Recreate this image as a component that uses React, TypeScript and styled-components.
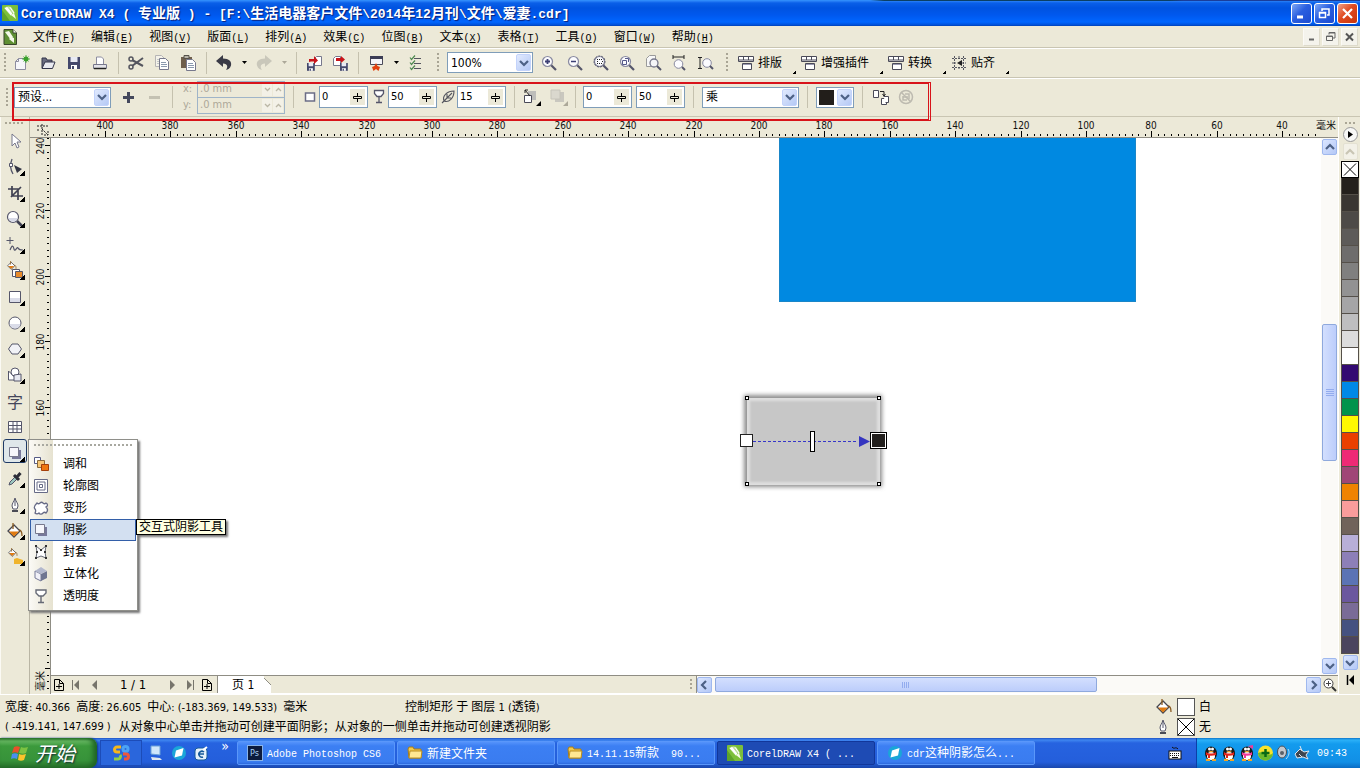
import React from "react";
import styled, { createGlobalStyle, css } from "styled-components";

const face = "#ece9d8";
const cjk = `"Noto Sans CJK SC", sans-serif`;
const tahoma = `"DejaVu Sans Condensed", ${cjk}`;
const mono = `"Liberation Mono", ${cjk}`;

const GlobalStyle = createGlobalStyle`
  *, *::before, *::after { box-sizing: border-box; }
  body { margin: 0; overflow: hidden; background: ${face}; font: 12px/16px ${tahoma}; color: #000; }
  button, input, select { font: inherit; color: inherit; margin: 0; padding: 0; border: 0; background: none; border-radius: 0; }
  svg { display: block; flex: none; }
`;

const Window = styled.div`
  display: flex;
  flex-direction: column;
  height: 100vh;
`;

/* Latin runs use their own family and size next to the 12px Chinese glyphs. */
const Latin = styled.span<{ $size: number; $mono?: boolean }>`
  font-family: ${(p) => (p.$mono ? mono : tahoma)};
  font-size: ${(p) => p.$size}px;
  white-space: pre;
`;

function Mixed({ text, size = 10, fixed = true }: { text: string; size?: number; fixed?: boolean }) {
  return (
    <>
      {text.split(/([\x20-\x7e]+)/).filter(Boolean).map((s, i) =>
        /^[\x20-\x7e]/.test(s) ? <Latin key={i} $size={size} $mono={fixed}>{s}</Latin> : s
      )}
    </>
  );
}

function Art({ w = 20, h = 20, children }: { w?: number; h?: number; children: React.ReactNode }) {
  return <svg width={w} height={h} viewBox={`0 0 ${w} ${h}`} fill="none" aria-hidden="true">{children}</svg>;
}

/* ---------- title bar ---------- */
const TitleBar = styled.header`
  display: flex;
  align-items: center;
  gap: 3px;
  height: 26px;
  flex: none;
  padding: 0 2px;
  background:
    linear-gradient(90deg, #2f8bfa 64%, #0b3f63 65%, #0b3f63 86%, #1a3d9a 87%) top / 100% 1px no-repeat,
    linear-gradient(#3a93ff 0, #0a5fe8 3px, #0053e0 8px, #0058ee 15px, #0066ff 22px, #0050d8 25px, #003fb0 26px);
`;
const Title = styled.h1`
  flex: 1;
  margin: 0;
  font: bold 14px/20px ${cjk};
  color: #fff;
  text-shadow: 1px 1px 1px #0a1e74;
  white-space: pre;
`;
const WindowButton = styled.button<{ $close?: boolean }>`
  display: grid;
  place-items: center;
  width: 21px;
  height: 21px;
  margin-left: -1px;
  border: 1px solid #fff;
  border-radius: 3px;
  background: ${(p) =>
    p.$close
      ? "linear-gradient(135deg, #f0a088, #e04a20 45%, #c8350c)"
      : "linear-gradient(135deg, #7fa8f5, #2a5fe0 45%, #1c4bd0)"};
`;

function CorelMark({ page }: { page?: boolean }) {
  if (page) {
    return (
      <Art w={16} h={16}>
        <path d="M2 .5h9l3.500 3.500v11.500H2z" fill="#5f8f34" stroke="#39452c" />
        <path d="M11 .5V4h3.500" fill="#fff" stroke="#39452c" />
        <path d="M3 3l4-1 4 6-2 3zM9 8l3 1v5l-5-4z" fill="#f4f9e8" />
      </Art>
    );
  }
  return (
    <Art w={16} h={16}>
      <rect width="16" height="16" rx="1" fill="#7cbf3a" />
      <path d="M0 5l8 11H0z" fill="#5da32b" />
      <path d="M2 3l4-2 5 7-2 3zM5 1l4 1 4 6-2 1z" fill="#fff" stroke="#7cbf3a" strokeWidth=".5" />
      <path d="M9 10l3-2 2 6z" fill="#f4f9e8" />
    </Art>
  );
}

/* ---------- menu bar ---------- */
const MenuBar = styled.nav`
  display: flex;
  align-items: center;
  height: 22px;
  flex: none;
  padding: 0 2px;
  border-bottom: 1px solid #c9c5b2;
  box-shadow: 0 1px #fff;
`;
const MenuList = styled.div`
  display: flex;
  flex: 1;
  padding: 2px 0 0 7px;
`;
const MenuButton = styled.button`
  padding: 0 8px;
  line-height: 18px;
  white-space: nowrap;
`;
const ChildButton = styled.button`
  display: grid;
  place-items: center;
  width: 17px;
  height: 18px;
  margin-left: 2px;
  background: #f4f3ec;
  border: 1px solid #fbfaf6;
  border-right-color: #dddacb;
  border-bottom-color: #dddacb;
`;

const menus = [
  ["文件", "F"], ["编辑", "E"], ["视图", "V"], ["版面", "L"], ["排列", "A"], ["效果", "C"],
  ["位图", "B"], ["文本", "X"], ["表格", "T"], ["工具", "O"], ["窗口", "W"], ["帮助", "H"],
];

/* ---------- toolbars ---------- */
const Toolbar = styled.div`
  display: flex;
  align-items: center;
  height: 30px;
  flex: none;
  border-bottom: 1px solid #c9c5b2;
  box-shadow: 0 1px #fff;
`;
const PropertyBar = styled(Toolbar)`
  position: relative;
  height: 39px;
  box-shadow: none;
`;
const RedFrame = styled.div`
  position: absolute;
  left: 12px;
  top: 4px;
  width: 919px;
  height: 39px;
  border: 2px solid #d8131a;
  border-right: 3px double #d8131a;
  pointer-events: none;
  z-index: 3;
`;
const Grip = styled.span<{ $w: number }>`
  flex: none;
  width: ${(p) => p.$w}px;
  height: 19px;
  background: repeating-linear-gradient(#a9a595 0 2px, transparent 2px 4px) center / 2px 100% no-repeat;
`;
const Divider = styled.span<{ $w?: number }>`
  flex: none;
  width: ${(p) => p.$w ?? 10}px;
  height: 22px;
  background: linear-gradient(#c5c1ae, #c5c1ae) center / 1px 100% no-repeat;
`;
const ToolButton = styled.button<{ $w?: number }>`
  display: grid;
  place-items: center;
  flex: none;
  width: ${(p) => p.$w ?? 26}px;
  height: 24px;
`;
const LabelButton = styled.button`
  display: flex;
  align-items: center;
  flex: none;
  height: 28px;
  white-space: nowrap;
`;
const IconSlot = styled.span`
  width: 22px;
  padding-left: 2px;
`;
const CornerTriangle = styled.span`
  align-self: flex-end;
  width: 3px;
  height: 3px;
  margin: 0 3px 3px 11px;
  background: linear-gradient(135deg, transparent 45%, #000 46%);
`;

const Combo = styled.span<{ $w: number }>`
  position: relative;
  flex: none;
  width: ${(p) => p.$w}px;
  height: 21px;
  border: 1px solid #7f9db9;
  background: #fff;
`;
const Select = styled.select`
  appearance: none;
  width: 100%;
  height: 19px;
  padding: 0 18px 0 3px;
  font-size: 12px;
`;
const DropArrow = styled.span`
  position: absolute;
  right: 1px;
  top: 1px;
  display: grid;
  place-items: center;
  width: 15px;
  height: 17px;
  border-radius: 2px;
  background: linear-gradient(135deg, #e1eafe, #b5c9f5);
  border: 1px solid #c3d3fb;
  pointer-events: none;
`;
const ColorChip = styled.span`
  position: absolute;
  left: 2px;
  top: 2px;
  width: 15px;
  height: 15px;
  background: #221e1a;
  pointer-events: none;
`;
const Chevron = ({ dir = "down", c = "#4d6185" }: { dir?: string; c?: string }) => {
  const d: Record<string, string> = {
    down: "M1 3l4 4 4-4", up: "M1 7l4-4 4 4", left: "M7 1L3 5l4 4", right: "M3 1l4 4-4 4",
  };
  return <Art w={10} h={10}><path d={d[dir]} stroke={c} strokeWidth="2.200" /></Art>;
};
function DropDown({ w, label, value, chip }: { w: number; label: string; value: string; chip?: boolean }) {
  return (
    <Combo $w={w}>
      <Select aria-label={label}><option>{value}</option></Select>
      {chip && <ColorChip />}
      <DropArrow><Chevron /></DropArrow>
    </Combo>
  );
}

const Field = styled.span<{ $w: number }>`
  display: flex;
  align-items: center;
  flex: none;
  width: ${(p) => p.$w}px;
  height: 22px;
  border: 1px solid #7f9db9;
  background: #fff;
`;
const FieldInput = styled.input`
  flex: 1;
  min-width: 0;
  padding-left: 2px;
  font-size: 11px;
  line-height: 18px;
`;
const SpinHandle = styled.button`
  display: grid;
  place-items: center;
  width: 15px;
  height: 16px;
  margin-right: 2px;
  background: ${face};
`;
function NumberField({ label, value, w = 49 }: { label: string; value: string; w?: number }) {
  return (
    <Field $w={w}>
      <FieldInput aria-label={label} defaultValue={value} />
      <SpinHandle aria-label={`${label} +/-`}>
        <Art w={11} h={11}>
          <path d="M5.500 1v3M5.500 7v3" stroke="#000" />
          <path d="M1.500 4.500h8v2h-8z" fill={face} stroke="#000" />
        </Art>
      </SpinHandle>
    </Field>
  );
}
const Stack = styled.div`
  display: flex;
  flex-direction: column;
  flex: none;
`;
const AxisRow = styled.label`
  display: flex;
  align-items: center;
  height: 16px;
  font-size: 11px;
  color: #aca899;
`;
const AxisName = styled.span`
  width: 14px;
`;
const AxisBox = styled.span`
  display: flex;
  align-items: center;
  gap: 1px;
  width: 88px;
  height: 17px;
  padding-right: 1px;
  border: 1px solid #9fb4c8;
`;
const AxisInput = styled.input`
  flex: 1;
  min-width: 0;
  padding-left: 2px;
`;
const TinyBox = styled.span`
  display: grid;
  place-items: center;
  width: 10px;
  height: 13px;
  background: #f3f1e7;
`;
const Spacer = styled.span<{ $w: number }>`
  flex: none;
  width: ${(p) => p.$w}px;
`;

const ink = "#4a4a58";
const Caret = ({ c = "#000" }: { c?: string }) => <Art w={5} h={3}><path d="M0 0h5L2.500 3z" fill={c} /></Art>;
const Floppy = ({ x, y, s }: { x: number; y: number; s: number }) => (
  <g transform={`translate(${x} ${y}) scale(${s})`}>
    <path d="M0 0h12v12H0z" fill="#44486c" /><path d="M2.500 0h7v5h-7z" fill="#e8eaf4" /><path d="M3 8h6v4H3z" fill="#fff" /><path d="M4 9h2v3H4z" fill="#44486c" />
  </g>
);
const Sheet = ({ x, y }: { x: number; y: number }) => (
  <g transform={`translate(${x} ${y})`}><path d="M.5.500h6l3 3v8h-9z" fill="#fff" stroke="#77788c" /><path d="M2 4.500h5M2 6.500h6M2 8.500h6" stroke="#8b9aae" /></g>
);
const Lens = ({ children }: { children?: React.ReactNode }) => (
  <Art w={16} h={16}><path d="M10 10l5 5" stroke="#55566a" strokeWidth="2.200" /><circle cx="6.500" cy="6.500" r="5" fill="#fbfbfe" stroke="#8889a0" strokeWidth="1.200" />{children}</Art>
);

const fileIcons: Record<string, React.ReactNode> = {
  新建: <Art w={16} h={16}><path d="M1.500 6.500l3-3h7v11h-10z" fill="#f6f6fa" stroke="#8d8da0" /><path d="M1.500 6.500h3v-3" stroke="#8d8da0" /><circle cx="12" cy="4" r="2.500" fill="#3aa22c" /><path d="M12 0v8M8 4h8M9.500 1.500l5 5M14.500 1.500l-5 5" stroke="#3aa22c" strokeWidth=".8" /></Art>,
  打开: <Art w={16} h={16}><path d="M2 13V3h4l1 2h5v3" fill="#6a6c80" stroke="#33354a" /><path d="M2 13.500L5 7h10l-2.500 6.500z" fill="#e9eaf0" stroke="#33354a" /></Art>,
  保存: <Art w={14} h={14}><Floppy x={1} y={1} s={1} /></Art>,
  打印: <Art w={16} h={16}><path d="M4.500 9V2h5l2 2v5" fill="#fff" stroke="#8d8da0" /><path d="M1.500 9.500h13v4h-13z" fill="#e4e4ea" stroke="#77788c" /><path d="M2 13.500h12" stroke="#222" strokeWidth="1.500" /></Art>,
};
const editIcons: Record<string, React.ReactNode> = {
  剪切: <Art w={16} h={16}><path d="M4 5l11 6M4 11l11-8" stroke="#55565f" strokeWidth="2" /><circle cx="3" cy="4" r="2" stroke="#55565f" strokeWidth="1.500" /><circle cx="3" cy="12" r="2" stroke="#55565f" strokeWidth="1.500" /></Art>,
  复制: <Art w={16} h={16}><g opacity=".45"><Sheet x={1} y={0} /></g><Sheet x={5} y={3} /></Art>,
  粘贴: <Art w={16} h={16}><path d="M1 2h11v11H1z" fill="#6f5f4c" /><path d="M4 .5h5v3H4z" fill="#b7b3a8" stroke="#55514a" /><Sheet x={6} y={4} /></Art>,
};
const zoomIcons: Record<string, React.ReactNode> = {
  放大: <Lens><path d="M4 6.500h5M6.500 4v5" stroke="#3c3f74" strokeWidth="1.800" /></Lens>,
  缩小: <Lens><path d="M4 6.500h5" stroke="#3c3f74" strokeWidth="1.500" /></Lens>,
  缩放选定范围: <Lens><circle cx="6.500" cy="6.500" r="5.500" stroke="#55566a" strokeDasharray="2 1" /><path d="M4 4.500h6M4 8.500h6M4 6.500h1M9 6.500h1" stroke="#222" strokeDasharray="1 1" /></Lens>,
  缩放全部: <Lens><path d="M3.500 5.500h4v4h-4zM6 3.500h3.500V7" stroke="#55588a" /></Lens>,
  缩放页面: <Art w={17} h={16}><path d="M1.500 3.500l3-3h6v11h-9z" fill="#f7f7f7" stroke="#9a9a9a" /><circle cx="9" cy="8" r="4" fill="#f5f5f8" stroke="#77788c" strokeWidth="1.300" /><path d="M12 11l4 4" stroke="#55566a" strokeWidth="2" /></Art>,
  缩放页宽: <Art w={16} h={16}><path d="M2 0v4M13 0v4M2 2h11" stroke="#222" /><circle cx="7.500" cy="9" r="4.300" fill="#fbfbfe" stroke="#8889a0" /><path d="M11 12l3 3" stroke="#55566a" strokeWidth="2" /></Art>,
  缩放页高: <Art w={17} h={16}><path d="M1 2.500h4M1 13.500h4M3 2v12" stroke="#222" /><circle cx="10" cy="8" r="4.300" fill="#fbfbfe" stroke="#8889a0" /><path d="M13 11l3 3" stroke="#55566a" strokeWidth="2" /></Art>,
};
const PluginArt = () => (
  <Art w={17} h={16}><path d="M.5 1.500h15v5H.5z" fill="#fff" stroke={ink} /><path d="M5.500 1v4M10.500 1v4M.5 5h15" stroke={ink} /><path d="M4.500 8.500h9v6h-9z" fill="#fff" stroke={ink} /><path d="M5 9.500h8" stroke="#9a9ab0" /></Art>
);
const SnapArt = () => (
  <Art w={16} h={16}><path d="M3.500 1v14M12.500 1v14M8 1v3M8 12v3M1 3.500h14M1 12.500h14M1 8h4M11 8h4" stroke="#55565f" strokeDasharray="2 1" /><path d="M11 5v6L6 8z" fill="#222" /></Art>
);
const RectArt = () => <Art w={12} h={12}><path d="M1.500 2h9v8h-9z" fill="#fff" stroke="#6b6d86" strokeWidth="1.500" /></Art>;
const GlassArt = () => <Art w={12} h={16}><path d="M1.500 1.500h9v3L8 7.500H4L1.500 4.500zM6 7.500v6M3 13.500h6" fill="#fff" stroke="#55566a" strokeWidth="1.300" /></Art>;
const LeafArt = () => <Art w={14} h={14}><path d="M1 13L11 3M3 11C1 6 6 1 13 1c0 7-5 12-10 10M6 8V4M6 8h4" stroke="#55565f" strokeWidth="1.100" /></Art>;

/* ---------- workspace ---------- */
const Main = styled.main`
  display: flex;
  flex: 1;
  min-height: 0;
`;
const Toolbox = styled.aside`
  flex: none;
  width: 30px;
  padding: 4px 0 0 2px;
  border-left: 1px solid #fbfaf4;
  border-right: 1px solid #b9b5a4;
`;
const ToolGrip = styled.div`
  height: 6px;
  margin-right: 4px;
  background: repeating-linear-gradient(90deg, #aaa695 0 2px, transparent 2px 4px) 2px 1px / 20px 2px no-repeat;
`;
const ToolSlot = styled.div`
  position: relative;
  height: 26px;
  z-index: 4;
`;
const Tool = styled.button<{ $active?: boolean }>`
  position: relative;
  display: grid;
  place-items: center;
  width: 24px;
  height: 24px;
  padding-top: 3px;
  border: 1px solid transparent;
  ${(p) => p.$active && css`
    border-color: #1f3a66;
    border-radius: 3px;
    background: #dfe7ea;
  `}
`;
const ToolMore = styled.span`
  position: absolute;
  right: 1px;
  bottom: 0;
  width: 5px;
  height: 5px;
  background: linear-gradient(135deg, transparent 45%, #000 46%);
`;
const TextGlyph = styled.span`
  font: 16px/18px ${cjk};
  color: #44465a;
`;

const Flyout = styled.div`
  position: absolute;
  left: 25px;
  top: 0;
  width: 110px;
  height: 172px;
  padding: 13px 1px 0;
  border: 1px solid #8f8f8a;
  background:
    repeating-linear-gradient(90deg, #a8a8a0 0 2px, transparent 2px 4px) 5px 4px / 99px 2px no-repeat,
    linear-gradient(90deg, #fbfaf6 0, #e6e2d0 24px, #fff 24px);
  box-shadow: 2px 2px 2px #777;
`;
const FlyoutItem = styled.button<{ $on?: boolean }>`
  display: flex;
  align-items: center;
  gap: 14px;
  width: 100%;
  height: 22px;
  padding-left: 2px;
  border: 1px solid ${(p) => (p.$on ? "#335ea8" : "transparent")};
  background: ${(p) => (p.$on ? "#d3e0f1" : "none")};
`;
const Tooltip = styled.div`
  position: absolute;
  left: 133px;
  top: 80px;
  padding: 0 2px;
  border: 1px solid #000;
  background: #ffffe1;
  line-height: 14px;
  white-space: nowrap;
  box-shadow: 2px 2px 2px #777;
`;

const dark = "#55566a";
const Mug = ({ x = 0, y = 0, s = 1 }: { x?: number; y?: number; s?: number }) => (
  <g transform={`translate(${x} ${y}) scale(${s})`}>
    <path d="M7 2l6 6-6 6-6-6z" fill="#fff" stroke="#44454f" strokeWidth="1.300" /><path d="M2 8.500h10L7 13.500z" fill="#e07a10" /><path d="M6 0v6M12 7c3 0 3 3 3 6" stroke="#8a5a20" strokeWidth="1.300" />
  </g>
);
const NibArt = () => <Art w={14} h={16}><path d="M7 1c1 4 3 5 3 8l-1 3H5L4 9c0-3 2-4 3-8z" fill="#fff" stroke={dark} /><path d="M7 3v6" stroke={dark} /><path d="M4 13h6v2H4z" fill="#4a4b55" /></Art>;
const ShadowArt = () => <Art w={16} h={16}><path d="M5 5h9v9H5z" fill="#77789a" /><path d="M2.500 2.500h9v9h-9z" fill="#f6f6fb" stroke="#77788c" /></Art>;

const tools: { name: string; more?: boolean; art: React.ReactNode }[] = [
  { name: "挑选", art: <Art><path d="M7 3v12l3-3 2 5 2-1-2-5h4z" fill="#fff" stroke="#77788c" /></Art> },
  { name: "形状", more: true, art: <Art><path d="M7 2c-2 5-2 10 1 15" stroke={dark} strokeWidth="1.300" /><path d="M4.500 6.500h3v3h-3z" fill="#fff" stroke={dark} /><path d="M9 8l8 4-5 4z" fill="#333544" /></Art> },
  { name: "裁剪", more: true, art: <Art><path d="M7 3v10h11M3 6h10v11M6 14L16 4" stroke="#3f4052" strokeWidth="1.700" /></Art> },
  { name: "缩放", more: true, art: <Art><path d="M12 12l6 6" stroke="#3f4052" strokeWidth="2.600" /><circle cx="8" cy="8" r="5.500" fill="#fff" stroke={dark} strokeWidth="1.200" /><path d="M3.500 9h9c-1 5-8 5-9 0z" fill="#d7d9e6" /></Art> },
  { name: "手绘", more: true, art: <Art><path d="M5 2v7M1.500 5.500h7" stroke={dark} /><path d="M5 15c2-5 3-5 4-1s3-3 4-1 2 2 5 2" stroke={dark} strokeWidth="1.200" /></Art> },
  { name: "智能填充", more: true, art: <Art><Mug x={2} y={0} s={0.6} /><path d="M7.500 8.500h7v7h-7z" fill="#fff" stroke={dark} /><path d="M10.500 10.500h7v6h-7z" fill="#e88b2a" stroke={dark} /></Art> },
  { name: "矩形", more: true, art: <Art><path d="M4.500 4.500h11v11h-11z" fill="#fff" stroke={dark} /><path d="M5 11h10v4H5z" fill="#dadce8" /></Art> },
  { name: "椭圆形", more: true, art: <Art><circle cx="10" cy="10" r="6" fill="#fff" stroke={dark} /><path d="M4.500 11h11c-1 6-10 6-11 0z" fill="#dadce8" /></Art> },
  { name: "多边形", more: true, art: <Art><path d="M7 5h6l3.500 5-3.500 5H7l-3.500-5z" fill="#f1f2f7" stroke={dark} /></Art> },
  { name: "基本形状", more: true, art: <Art><path d="M3.500 6v9h9z" fill="#fff" stroke={dark} /><circle cx="10" cy="7" r="4" fill="#fff" stroke={dark} /><path d="M9 10l7-1v7H9z" fill="#e7e8f0" stroke={dark} /></Art> },
  { name: "文本", art: <TextGlyph>字</TextGlyph> },
  { name: "表格", art: <Art><path d="M3.500 4.500h13v11h-13zM8 4v12M12 4v12M3 8.500h13M3 12h13" fill="#fff" stroke={dark} /></Art> },
  { name: "交互式阴影", more: true, art: <ShadowArt /> },
  { name: "滴管", more: true, art: <Art><path d="M4 16l1-3 6-6 2 2-6 6z" fill="#9cc8c0" stroke={dark} /><path d="M9 6l5 5M12 8l3.500-4" stroke="#2c2d38" strokeWidth="3" /></Art> },
  { name: "轮廓", more: true, art: <NibArt /> },
  { name: "填充", more: true, art: <Art w={18} h={16}><Mug x={1} /></Art> },
  { name: "交互式填充", more: true, art: <Art><Mug x={3} y={1} s={0.6} /><path d="M9 12l3-1 6 2v4H9z" fill="#f0b42c" /></Art> },
];

const effects = [
  { name: "调和", art: <Art w={16} h={16}><path d="M1.500 1.500h6v6h-6z" fill="#fff" stroke="#555b86" /><path d="M4.500 4.500h7v7h-7z" fill="#f6c777" stroke="#8a6a3a" /><path d="M8.500 8.500h7v6h-7z" fill="#ee7711" stroke="#a5400a" /></Art> },
  { name: "轮廓图", art: <Art w={16} h={16}><path d="M1.500 1.500h13v13h-13zM4 4h8v8H4zM6.500 6.500h3v3h-3z" fill="#fff" stroke="#666a86" /></Art> },
  { name: "变形", art: <Art w={16} h={16}><path d="M4 3c1 1 2 1 3 0s2-1 3 0 2 1 3 0c2 1 2 3 0 4 2 2 2 4 0 6-1-1-2-1-3 0s-3 2-4 0c-1 1-3 1-4 0 1-2 1-3 0-4s-1-3 2-6z" fill="#fff" stroke="#666a86" strokeWidth="1.300" /></Art> },
  { name: "阴影", art: <ShadowArt /> },
  { name: "封套", art: <Art w={16} h={16}><path d="M3 2l5 4 5-4-1 6 1 6-5-2-5 2 1-6z" fill="#fff" stroke="#666a76" /><path d="M2 1h2v2H2zM12 1h2v2h-2zM2 13h2v2H2zM12 13h2v2h-2zM3 7h2v2H3zM11 7h2v2h-2zM7 5h2v2H7z" fill="#333" /></Art> },
  { name: "立体化", art: <Art w={16} h={16}><path d="M2 5l6 3v7l-6-3z" fill="#f1f1f8" stroke="#777b98" /><path d="M8 8l6-3v7l-6 3z" fill="#6f7590" /><path d="M2 5l6-4 6 4-6 3z" fill="#b3b8cd" /></Art> },
  { name: "透明度", art: <Art w={16} h={16}><path d="M3 2h10v3l-3 3H6L3 5zM8 8v6M5 14.500h6" fill="#fff" stroke="#666a76" strokeWidth="1.400" /></Art> },
];

const Workspace = styled.section`
  display: grid;
  flex: 1;
  min-width: 0;
  grid-template: 21px minmax(0, 1fr) 19px / 21px minmax(0, 1fr) 17px;
`;
const TopRuler = styled.div`
  grid-column: 1 / 4;
  overflow: hidden;
  border-bottom: 1px solid #8f8d84;
`;
const SideRuler = styled.div`
  grid-row: 2 / 4;
  min-height: 0;
  border-right: 1px solid #8f8d84;
`;
const Canvas = styled.div`
  position: relative;
  overflow: hidden;
  background: #fff;
`;
const BlueShape = styled.div`
  position: absolute;
  left: 728px;
  top: 0;
  width: 357px;
  height: 164px;
  background: #0089e1;
  border: 1px solid #1a86c8;
  border-top: 0;
`;
const ShadowShape = styled.div`
  position: absolute;
  left: 681px;
  top: 248px;
`;
const RulerMark = styled.text`
  font: 10px ${tahoma};
  text-anchor: middle;
  fill: #111;
`;
const PlainRuler = styled.svg`
  overflow: visible;
`;

/* Distance on screen of 20 mm. */
const step = 65.4;
function HorizontalRuler() {
  return (
    <svg width="100%" height="20" aria-label="水平标尺">
      {Array.from({ length: 194 }, (_, k) => Math.round(75 + ((k - 8) * step) / 10)).map((x, k) => (
        <rect key={k} x={x} y={(k - 8) % 10 === 0 ? 14 : 17} width="1" height={(k - 8) % 10 === 0 ? 6 : 2} fill="#000" />
      ))}
      {Array.from({ length: 19 }, (_, i) => (
        <RulerMark key={i} x={Math.round(75 + i * step)} y="12">{400 - i * 20}</RulerMark>
      ))}
      <svg x="100%" overflow="visible"><RulerMark x="-12" y="12">毫米</RulerMark></svg>
      <path d="M7 9h11M12 7v12M8 12v2M12 12l6 6M18 14v4h-4" stroke="#222" strokeDasharray="2 1" fill="none" />
    </svg>
  );
}
function VerticalRuler() {
  return (
    <PlainRuler width="20" height="100%" aria-label="垂直标尺">
      {Array.from({ length: 85 }, (_, k) => Math.round(7 + ((k - 1) * step) / 10)).map((y, k) => (
        <rect key={k} y={y} x={(k - 1) % 10 === 0 ? 15 : 17} height="1" width={(k - 1) % 10 === 0 ? 5 : 2} fill="#000" />
      ))}
      {Array.from({ length: 8 }, (_, i) => (
        <RulerMark key={i} transform={`translate(14 ${Math.round(8 + i * step)}) rotate(-90)`}>{240 - i * 20}</RulerMark>
      ))}
      <svg y="100%" overflow="visible"><RulerMark transform="translate(14 -13) rotate(-90)">毫米</RulerMark></svg>
    </PlainRuler>
  );
}
function ShadowedRectangle() {
  return (
    <svg width="165" height="110" aria-label="阴影对象">
      <defs>
        <filter id="soft" x="-10%" y="-10%" width="120%" height="120%"><feGaussianBlur stdDeviation="2" /></filter>
        <filter id="fine" x="-10%" y="-10%" width="120%" height="120%"><feGaussianBlur stdDeviation="1" /></filter>
      </defs>
      <rect x="12" y="9" width="138" height="92" fill="#8c8c8c" filter="url(#soft)" />
      <rect x="15" y="12" width="133" height="87" fill="#dedede" />
      <rect x="18" y="15" width="127" height="81" fill="#c7c7c7" filter="url(#fine)" />
      {[[15, 12], [147, 12], [15, 98], [147, 98]].map(([x, y]) => (
        <rect key={`${x}-${y}`} x={x - 1.5} y={y - 1.5} width="3" height="3" fill="#fff" stroke="#000" />
      ))}
      <path d="M21 55.500h105" stroke="#3535c8" strokeDasharray="3 2" />
      <path d="M127 50v11l11-5.500z" fill="#3535c0" />
      <rect x="8.500" y="48.500" width="12" height="12" fill="#fff" stroke="#222" />
      <rect x="78.500" y="45.500" width="4" height="20" fill="#fff" stroke="#000" />
      <rect x="138.500" y="46.500" width="16" height="16" fill="#fff" stroke="#000" />
      <rect x="140" y="48" width="13" height="13" fill="#221f1d" />
    </svg>
  );
}

const VScroll = styled.div`
  display: flex;
  flex-direction: column;
  align-items: center;
  padding: 1px 0;
  background: #fbfaf7;
`;
const HScroll = styled.div`
  display: flex;
  align-items: center;
  flex: 1;
  min-width: 0;
  border-left: 1px solid #8f8d84;
  background: #fbfaf7;
`;
const ScrollButton = styled.button`
  display: grid;
  place-items: center;
  flex: none;
  width: 15px;
  height: 16px;
  border: 1px solid #9fb8ee;
  border-radius: 2px;
  background: linear-gradient(135deg, #dbe6ff, #b4c8f6);
`;
const Track = styled.span<{ $n: number }>`
  flex: ${(p) => p.$n} 0 0;
`;
const Thumb = styled.span<{ $n: number; $vertical?: boolean }>`
  display: grid;
  place-items: center;
  flex: ${(p) => p.$n} 0 0;
  ${(p) => (p.$vertical ? "width: 15px;" : "height: 15px;")}
  border: 1px solid #8fa9dd;
  border-radius: 2px;
  background: linear-gradient(${(p) => (p.$vertical ? 90 : 180)}deg, #d3dffe, #bccdfb);
`;

const PageBar = styled.div`
  display: flex;
  grid-column: 2 / 4;
  align-items: stretch;
  border-top: 1px solid #8f8d84;
  border-bottom: 1px solid #fff;
`;
const PageButton = styled.button<{ $w: number }>`
  display: grid;
  place-items: center;
  width: ${(p) => p.$w}px;
`;
const PageCount = styled.span`
  width: 60px;
  font-size: 13px;
  text-align: center;
  line-height: 17px;
`;
const PageTab = styled.button`
  width: 54px;
  background: linear-gradient(#fff, #fff) 0 0 / 46px 100% no-repeat, linear-gradient(225deg, ${face} 6px, #8f8d84 6px 7px, #fff 7px) right / 8px 100% no-repeat;
  border-left: 1px solid #8f8d84;
  text-align: left;
  padding-left: 14px;
  line-height: 14px;
`;
const PageFill = styled.span`
  flex: none;
  width: 33%;
  background: repeating-linear-gradient(#a9a595 0 2px, transparent 2px 4px) right 4px top 3px / 2px 12px no-repeat;
`;
const CornerZoom = styled.button`
  display: grid;
  place-items: center;
  width: 17px;
`;
const PageAdd = () => <Art w={12} h={14}><path d="M1.500 1.500h5l4 4v7h-9zM6.500 1.500v4h4" stroke="#000" /><path d="M3 8.500h6M6 6v5" stroke="#000" /></Art>;
const Step = ({ bar, flip }: { bar?: boolean; flip?: boolean }) => (
  <Art w={9} h={10}><g transform={flip ? "translate(9 0) scale(-1 1)" : undefined}><path d="M7 0v10L2 5z" fill="#77756c" />{bar && <path d="M.5 0v10" stroke="#77756c" />}</g></Art>
);

const Palette = styled.aside`
  display: flex;
  flex-direction: column;
  align-items: center;
  flex: none;
  width: 22px;
  padding: 4px 1px 0 2px;
  border-left: 1px solid #fff;
`;
const PaletteGrip = styled.div`
  flex: none;
  width: 10px;
  height: 6px;
  background: repeating-linear-gradient(90deg, #aaa695 0 2px, transparent 2px 4px) 0 1px / 10px 2px no-repeat;
`;
const RoundButton = styled.button`
  display: grid;
  place-items: center;
  width: 15px;
  height: 15px;
  flex: none;
  border: 1px solid #999;
  border-radius: 50%;
  background: #f7f7f5;
`;
const PaletteStep = styled(ScrollButton)<{ $off?: boolean }>`
  height: ${(p) => (p.$off ? 17 : 15)}px;
  ${(p) => p.$off && css`background: #f3f1e8; border-color: #e4e1d2;`}
  margin: 1px 0;
`;
const Swatch = styled.button<{ $c: string }>`
  flex: none;
  width: 18px;
  height: 17px;
  border: 1px solid #555049;
  border-top-width: 0;
  background: ${(p) => p.$c};
`;
const NoColor = styled(Swatch)`
  border: 1px solid #000;
`;
const PaletteEnd = styled.button`
  display: grid;
  place-items: center;
  height: 18px;
`;
const colors = [
  "#24201c", "#3a3632", "#4d4a47", "#5d5b59", "#6e6d6c", "#80807f", "#929292", "#a5a5a6", "#bebebf", "#dcdcdc", "#ffffff",
  "#330a72", "#0089e6", "#00934c", "#fff800", "#eb4000", "#ee2a75", "#a04676", "#f08300", "#fa9c9b", "#70635a",
  "#b8afd8", "#8d7fb8", "#5b73b5", "#6b579e", "#7a6b97", "#455280", "#4b455e",
];

/* ---------- status ---------- */
const Status = styled.footer`
  display: flex;
  flex: none;
  height: 44px;
  padding: 2px 0 0 5px;
  border-top: 1px solid #fff;
`;
const StatusText = styled.div`
  display: grid;
  grid-template: 20px 20px / 400px 1fr;
  align-items: center;
  flex: 1;
  white-space: nowrap;
`;
const Measures = styled.span`
  display: flex;
  gap: 6px;
`;
const WideLine = styled.span`
  display: flex;
  gap: 8px;
  grid-column: 1 / 3;
`;
const StatusFills = styled.dl`
  display: grid;
  grid-template: 20px 20px / 21px 22px 161px;
  align-items: center;
  margin: 0;
`;
const FillBox = styled.dd`
  width: 18px;
  height: 18px;
  margin: 0;
  border: 1px solid #555;
  background: #fff;
`;
const FillName = styled.dd`
  margin: 0;
`;
const FillIcon = styled.dt`
  display: grid;
  justify-items: start;
`;

/* ---------- task bar ---------- */
const TaskBar = styled.nav`
  display: flex;
  align-items: center;
  flex: none;
  height: 30px;
  color: #fff;
  background: linear-gradient(#1f52c4 0, #3f86f0 2px, #2663e0 5px, #245edb 24px, #1a47ac 30px);
`;
const StartButton = styled.button`
  display: flex;
  align-items: center;
  gap: 6px;
  width: 97px;
  height: 30px;
  padding-left: 11px;
  border-radius: 0 8px 8px 0;
  font: italic 20px/28px ${cjk};
  text-shadow: 1px 1px 2px #123;
  background: linear-gradient(#2c7a2c 0, #66b862 3px, #3c9a3c 8px, #37933a 22px, #27702a 30px);
  box-shadow: inset -4px 0 5px #1f6424, 1px 0 2px #123a90;
`;
const QuickMain = styled.button`
  display: grid;
  place-items: center;
  width: 42px;
  height: 26px;
  margin: 0 2px 0 3px;
  border: 1px solid #1c4cb8;
  background: #2a66dc;
`;
const QuickIcon = styled.button`
  display: grid;
  place-items: center;
  width: 23px;
  height: 24px;
`;
const More = styled.button`
  align-self: flex-start;
  width: 24px;
  font-size: 14px;
`;
const TaskList = styled.div`
  display: flex;
  gap: 2px;
  flex: 1;
  min-width: 0;
`;
const Task = styled.button<{ $on?: boolean }>`
  display: flex;
  align-items: center;
  gap: 4px;
  flex: 0 1 158px;
  min-width: 0;
  height: 24px;
  padding-left: 9px;
  border: 1px solid ${(p) => (p.$on ? "#12379a" : "#5a97fa")};
  border-radius: 2px;
  background: ${(p) => (p.$on ? "#1e4bb4" : "linear-gradient(#5593fb 0, #3c7ff3 4px, #3a7cf0 20px, #2d68dc)")};
  white-space: pre;
  overflow: hidden;
`;
const TaskName = styled.span`
  padding-top: 2px;
`;
const Keyboard = styled.button`
  display: grid;
  place-items: center;
  width: 43px;
  height: 24px;
`;
const Tray = styled.div`
  display: flex;
  align-items: center;
  gap: 2px;
  width: 164px;
  height: 30px;
  padding-left: 6px;
  border-left: 1px solid #0c3fa8;
  background: linear-gradient(#0d73c8 0, #2bb0f8 2px, #139bee 6px, #118fe6 24px, #0a6cc4 30px);
`;
const Clock = styled.time`
  margin-left: 5px;
  padding-top: 2px;
  font: 10px/16px ${mono};
`;
const PsText = styled.text`
  font: 9px ${tahoma};
  fill: #a9d0f5;
`;
const Penguin = ({ bow }: { bow?: boolean }) => (
  <Art w={16} h={16}><ellipse cx="8" cy="8.500" rx="6" ry="7" fill="#1a1a1a" /><ellipse cx="8" cy="11" rx="4" ry="4" fill="#fff" /><circle cx="6.500" cy="4" r="1.500" fill="#fff" /><circle cx="9.500" cy="4" r="1.500" fill="#fff" /><path d="M5 6h6l-3 1.500z" fill="#f5a623" /><path d="M3 7c3 2 7 2 10 0v3c-3 1-7 1-10 0z" fill={bow ? "#f03a98" : "#e2231a"} /><path d="M5 10h2v3H5z" fill={bow ? "#f03a98" : "#e2231a"} />{bow && <path d="M9 1l5 3V0z" fill="#f03a98" />}<path d="M3 15h4M9 15h4" stroke="#f5a623" strokeWidth="2" /></Art>
);
const FolderArt = () => <Art w={16} h={16}><path d="M1 4l1-2h4l1 2h7v9H2z" fill="#f3c84a" stroke="#a67c1a" /><path d="M2 13l1-7h12l-1 7z" fill="#ffe893" stroke="#b98e22" /></Art>;
const CompassArt = () => <Art w={16} h={16}><circle cx="8" cy="8" r="7" fill="#1aa6d8" /><path d="M12.500 3l-1.500 7.500-7.500 2L5 5.500z" fill="#fff" /></Art>;

export default function App() {
  return (
    <Window>
      <GlobalStyle />
      <TitleBar>
        <CorelMark />
        <Title><Mixed size={13} text="CorelDRAW X4 ( 专业版 ) - [F:\生活电器客户文件\2014年12月刊\文件\爱妻.cdr]" /></Title>
        <WindowButton aria-label="最小化"><Art w={13} h={13}><path d="M2 10h6" stroke="#fff" strokeWidth="3" /></Art></WindowButton>
        <WindowButton aria-label="还原"><Art w={13} h={13}><path d="M1.500 5.500h6v5h-6zM1.500 6h6M4 4V2h7v6H9" stroke="#fff" strokeWidth="1.500" /></Art></WindowButton>
        <WindowButton $close aria-label="关闭"><Art w={13} h={13}><path d="M2 2l9 9M11 2l-9 9" stroke="#fff" strokeWidth="2.200" /></Art></WindowButton>
      </TitleBar>

      <MenuBar>
        <CorelMark page />
        <MenuList>
          {menus.map(([name, key]) => (
            <MenuButton key={key}>{name}<Latin $size={10} $mono>(<u>{key}</u>)</Latin></MenuButton>
          ))}
        </MenuList>
        <ChildButton aria-label="最小化文档"><Art w={11} h={11}><path d="M3 8.500h5" stroke="#666" strokeWidth="2" /></Art></ChildButton>
        <ChildButton aria-label="还原文档"><Art w={11} h={11}><path d="M1.500 5h6v4.500h-6zM4 3.500v-2h6V7H8M1.500 5.500h6M4 2h6" stroke="#666" /></Art></ChildButton>
        <ChildButton aria-label="关闭文档"><Art w={11} h={11}><path d="M2 2.500l7 7M9 2.500l-7 7" stroke="#555" strokeWidth="2" /></Art></ChildButton>
      </MenuBar>

      <Toolbar>
        <Grip $w={9} />
        {Object.entries(fileIcons).map(([n, a]) => <ToolButton key={n} aria-label={n}>{a}</ToolButton>)}
        <Divider />
        {Object.entries(editIcons).map(([n, a]) => <ToolButton key={n} aria-label={n}>{a}</ToolButton>)}
        <Divider />
        <ToolButton aria-label="撤消"><Art w={16} h={16}><path d="M0 6l7-6v3.500c6 0 9 3 8 7-1 3-3 4-5 4.500 2-3 2-6-3-6.500V12z" fill="#3a3a46" /></Art></ToolButton>
        <ToolButton $w={14} aria-label="撤消列表"><Caret /></ToolButton>
        <ToolButton aria-label="重做"><Art w={16} h={16}><path d="M16 6L9 0v3.500c-6 0-9 3-8 7 1 3 3 4 5 4.500-2-3-2-6 3-6.500V12z" fill="#c9c7ba" /></Art></ToolButton>
        <ToolButton $w={14} aria-label="重做列表"><Caret c="#aca899" /></ToolButton>
        <Divider />
        <ToolButton aria-label="导入"><Art w={17} h={16}><path d="M8.500 3.500l2-2h5v9h-7z" fill="#fff" stroke="#77788c" /><Floppy x={1} y={8} s={0.65} /><path d="M3 7V4h5V1l4 4.500L8 9V6.500H5z" fill="#c8141a" /></Art></ToolButton>
        <ToolButton aria-label="导出"><Art w={17} h={16}><path d="M1.500 3.500l2-2h5v9h-7z" fill="#fff" stroke="#77788c" /><Floppy x={8} y={8} s={0.65} /><path d="M4 3h5V1l4 3.500L9 8V6H4z" fill="#c8141a" /></Art></ToolButton>
        <Divider />
        <ToolButton aria-label="应用程序启动器"><Art w={16} h={16}><path d="M2.500 1.500h12v8h-12z" fill="#f4f4f8" stroke={ink} /><path d="M2 1h13v3H2z" fill="#3c3d55" /><path d="M8 8l1.500 3 2.500 1-1.500 4-2.500-2-2.500 2L4 12l2.500-1z" fill="#e2400f" /></Art></ToolButton>
        <ToolButton $w={14} aria-label="启动器列表"><Caret /></ToolButton>
        <ToolButton aria-label="选项"><Art w={16} h={16}><path d="M6 3.500h7M6 8.500h7M6 13.500h7" stroke="#55565f" /><path d="M2 2.500l1.500 2L7 .5M2 7.500l1.500 2L7 5.500M2 12.500l1.500 2L7 10.500" stroke="#4e8a50" strokeWidth="1.200" /></Art></ToolButton>
        <Grip $w={18} />
        <DropDown w={86} label="缩放级别" value="100%" />
        <Spacer $w={3} />
        {Object.entries(zoomIcons).map(([n, a]) => <ToolButton key={n} aria-label={n}>{a}</ToolButton>)}
        <Grip $w={18} />
        {["排版", "增强插件", "转换", "贴齐"].map((n) => (
          <LabelButton key={n}><IconSlot>{n === "贴齐" ? <SnapArt /> : <PluginArt />}</IconSlot>{n}<CornerTriangle /></LabelButton>
        ))}
      </Toolbar>

      <PropertyBar>
        <Grip $w={14} />
        <DropDown w={97} label="预设列表" value="预设..." />
        <Spacer $w={4} />
        <ToolButton aria-label="添加预设"><Art w={13} h={13}><path d="M6.500 1v11M1 6.500h11" stroke="#44485c" strokeWidth="3" /></Art></ToolButton>
        <ToolButton aria-label="删除预设"><Art w={13} h={13}><path d="M1 6.500h11" stroke="#c4c1b2" strokeWidth="3" /></Art></ToolButton>
        <Divider />
        <Spacer $w={6} />
        <Stack>
          {["x:", "y:"].map((n) => (
            <AxisRow key={n}>
              <AxisName>{n}</AxisName>
              <AxisBox>
                <AxisInput defaultValue=".0 mm" disabled />
                <TinyBox><Art w={7} h={5}><path d="M1 1l2.500 2.500L6 1" stroke="#bbb7a6" strokeWidth="1.300" /></Art></TinyBox>
                <TinyBox><Art w={7} h={5}><path d="M1 4l2.500-2.500L6 4" stroke="#bbb7a6" strokeWidth="1.300" /></Art></TinyBox>
              </AxisBox>
            </AxisRow>
          ))}
        </Stack>
        <Divider $w={17} />
        <ToolButton $w={16} aria-label="阴影角度"><RectArt /></ToolButton>
        <Spacer $w={1} />
        <NumberField label="阴影角度值" value="0" />
        <Spacer $w={3} />
        <ToolButton $w={16} aria-label="不透明度"><GlassArt /></ToolButton>
        <Spacer $w={1} />
        <NumberField label="阴影不透明度" value="50" />
        <Spacer $w={3} />
        <ToolButton $w={16} aria-label="羽化"><LeafArt /></ToolButton>
        <Spacer $w={1} />
        <NumberField label="阴影羽化" value="15" />
        <Divider $w={16} />
        <ToolButton aria-label="羽化方向" $w={18}><Art w={20} h={18}><path d="M6 3h8v9H6z" fill="#aaa9ae" opacity=".7" /><path d="M2.500 7.500h7v7h-7z" fill="#fff" stroke={ink} /><path d="M8 8L3 2M3 5V2h3" stroke="#222" /><path d="M19 13v5h-5z" fill="#000" /></Art></ToolButton>
        <Spacer $w={9} />
        <ToolButton aria-label="羽化边缘" $w={18}><Art w={20} h={18}><path d="M6 4h9v10H6z" fill="#c9c7bf" /><path d="M2 2h9v9H2z" fill="#dad8ce" stroke="#c6c4ba" /><path d="M19 13v5h-5z" fill="#aca899" /></Art></ToolButton>
        <Divider $w={16} />
        <NumberField label="淡出" value="0" />
        <Spacer $w={4} />
        <NumberField label="阴影延展" value="50" />
        <Divider $w={17} />
        <DropDown w={97} label="阴影操作" value="乘" />
        <Divider $w={17} />
        <DropDown w={38} label="阴影颜色" value="" chip />
        <Divider $w={16} />
        <ToolButton $w={22} aria-label="复制阴影属性"><Art w={18} h={18}><path d="M1.500 2.500h5v7h-5zM9.500 10.500h5v6h-5z" fill="#fff" stroke={ink} /><path d="M11.500 8.500h5v6h-3" fill="#fff" stroke={ink} /><path d="M8 3.500h4V8M10.500 6l1.500 2 1.500-2" stroke="#222" /></Art></ToolButton>
        <Spacer $w={3} />
        <ToolButton $w={22} aria-label="清除阴影"><Art w={16} h={16}><circle cx="8" cy="8" r="6.500" stroke="#bdbab0" strokeWidth="1.500" /><path d="M3 3l10 10" stroke="#bdbab0" strokeWidth="1.500" /><path d="M7 5h4v5M5 7v4h4M5 8h5" stroke="#bdbab0" strokeWidth="1.500" /></Art></ToolButton>
        <RedFrame />
      </PropertyBar>

      <Main>
        <Toolbox>
          <ToolGrip />
          {tools.map((t) => {
            const active = t.name === "交互式阴影";
            return (
              <ToolSlot key={t.name}>
                <Tool $active={active} aria-label={t.name}>
                  {t.art}
                  {t.more && <ToolMore />}
                </Tool>
                {active && (
                  <Flyout role="menu">
                    {effects.map((e) => (
                      <FlyoutItem key={e.name} role="menuitem" $on={e.name === "阴影"}>{e.art}{e.name}</FlyoutItem>
                    ))}
                  </Flyout>
                )}
                {active && <Tooltip role="tooltip">交互式阴影工具</Tooltip>}
              </ToolSlot>
            );
          })}
        </Toolbox>

        <Workspace>
          <TopRuler><HorizontalRuler /></TopRuler>
          <SideRuler><VerticalRuler /></SideRuler>
          <Canvas>
            <BlueShape />
            <ShadowShape><ShadowedRectangle /></ShadowShape>
          </Canvas>
          <VScroll>
            <ScrollButton aria-label="向上"><Chevron dir="up" /></ScrollButton>
            <Track $n={170} />
            <Thumb $n={135} $vertical><Art w={8} h={8}><path d="M0 .5h8M0 2.500h8M0 4.500h8M0 6.500h8" stroke="#93acee" /></Art></Thumb>
            <Track $n={198} />
            <ScrollButton aria-label="向下"><Chevron /></ScrollButton>
          </VScroll>
          <PageBar>
            <PageButton $w={16} aria-label="添加页"><PageAdd /></PageButton>
            <PageButton $w={18} aria-label="第一页"><Step bar /></PageButton>
            <PageButton $w={18} aria-label="上一页"><Step /></PageButton>
            <PageCount>1 / 1</PageCount>
            <PageButton $w={18} aria-label="下一页"><Step flip /></PageButton>
            <PageButton $w={16} aria-label="最后一页"><Step bar flip /></PageButton>
            <PageButton $w={20} aria-label="在后面添加页"><PageAdd /></PageButton>
            <PageTab>页 1</PageTab>
            <PageFill />
            <HScroll>
              <ScrollButton aria-label="向左"><Chevron dir="left" /></ScrollButton>
              <Track $n={3} />
              <Thumb $n={381}><Art w={8} h={6}><path d="M.5 0v6M2.500 0v6M4.500 0v6M6.500 0v6" stroke="#93acee" /></Art></Thumb>
              <Track $n={209} />
              <ScrollButton aria-label="向右"><Chevron dir="right" /></ScrollButton>
            </HScroll>
            <CornerZoom aria-label="导航器"><Art w={14} h={14}><circle cx="5.500" cy="5.500" r="4.500" fill="#fff" stroke="#444" /><path d="M9 9l4 4" stroke="#333" strokeWidth="2" /><path d="M3 5.500h5M5.500 3v5" stroke="#444" /></Art></CornerZoom>
          </PageBar>
        </Workspace>

        <Palette>
          <PaletteGrip />
          <RoundButton aria-label="调色板菜单"><Art w={7} h={7}><path d="M1 0v7l5-3.500z" fill="#000" /></Art></RoundButton>
          <PaletteStep $off aria-label="向上滚动"><Chevron dir="up" c="#c9c5b4" /></PaletteStep>
          <NoColor $c="#fff" aria-label="无"><Art w={16} h={15}><path d="M2 1.500l12 12M14 1.500l-12 12" stroke="#000" /></Art></NoColor>
          {colors.map((c) => <Swatch key={c} $c={c} aria-label={c} />)}
          <PaletteStep aria-label="向下滚动"><Chevron /></PaletteStep>
          <PaletteEnd aria-label="展开"><Art w={9} h={10}><path d="M1.500 0v10" stroke="#000" strokeWidth="1.500" /><path d="M8 0v10L3 5z" fill="#000" /></Art></PaletteEnd>
        </Palette>
      </Main>

      <Status>
        <StatusText>
          <Measures>
            {["宽度: 40.366", "高度: 26.605", "中心: (-183.369, 149.533)", "毫米"].map((t) => (
              <span key={t}><Mixed fixed={false} size={11} text={t} /></span>
            ))}
          </Measures>
          <span><Mixed fixed={false} size={11} text="控制矩形 于 图层 1 (透镜)" /></span>
          <WideLine>
            <Latin $size={11}>( -419.141, 147.699 )</Latin>
            <span>从对象中心单击并拖动可创建平面阴影；从对象的一侧单击并拖动可创建透视阴影</span>
          </WideLine>
        </StatusText>
        <StatusFills>
          <FillIcon aria-label="填充"><Art w={17} h={16}><Mug /></Art></FillIcon>
          <FillBox /><FillName>白</FillName>
          <FillIcon aria-label="轮廓"><NibArt /></FillIcon>
          <FillBox><Art w={16} h={16}><path d="M0 0l16 16M16 0L0 16" stroke="#000" /></Art></FillBox><FillName>无</FillName>
        </StatusFills>
      </Status>

      <TaskBar>
        <StartButton>
          <Art w={18} h={18}>
            <path d="M3 3c2-1 4-1 6 0L7 9C5 8 3 8 1 9z" fill="#e8502a" /><path d="M10 3c2 1 4 1 7 0l-2 6c-2 1-4 1-7 0z" fill="#7cc242" />
            <path d="M1 10c2-1 4-1 6 0l-1 5c-2-1-4-1-6 0z" fill="#4a8ff0" /><path d="M8 10c2 1 4 1 7 0l-2 6c-2 1-4 1-6 0z" fill="#fbc42c" />
          </Art>
          开始
        </StartButton>
        <QuickMain aria-label="桌面助手"><Art w={17} h={16}><path d="M8 2H4a2.500 2.500 0 000 5h3" stroke="#f6b71c" strokeWidth="3" /><path d="M1 14h4a2.500 2.500 0 002-4" stroke="#8fd04a" strokeWidth="3" /><circle cx="12.500" cy="4" r="2.500" stroke="#4ba3f5" strokeWidth="3" /><path d="M10 9h3a2.500 2.500 0 010 5h-2" stroke="#f0563c" strokeWidth="3" /></Art></QuickMain>
        <QuickIcon aria-label="显示桌面"><Art w={14} h={16}><path d="M2 1h9v9l-9-1z" fill="#cfe6fb" stroke="#6aa0d8" /><path d="M2 12l9 1 2 2H3z" fill="#dfe7ee" /></Art></QuickIcon>
        <QuickIcon aria-label="浏览器"><CompassArt /></QuickIcon>
        <QuickIcon aria-label="邮件"><Art w={15} h={15}><rect x="1" y="2" width="12" height="12" rx="3" fill="#e6f2fb" stroke="#165a9a" /><path d="M4 8h6M10 6a3 3 0 10-1 5" stroke="#165a9a" strokeWidth="1.600" /><path d="M9 4l4-3" stroke="#fff" strokeWidth="2" /></Art></QuickIcon>
        <More aria-label="更多">»</More>
        <TaskList>
          <Task><Art w={16} h={16}><rect x=".5" y=".5" width="15" height="15" fill="#0c1b3e" stroke="#8ab4e8" /><PsText x="3" y="11">Ps</PsText></Art><TaskName><Mixed text="Adobe Photoshop CS6" /></TaskName></Task>
          <Task><FolderArt /><TaskName><Mixed text="新建文件夹" /></TaskName></Task>
          <Task><FolderArt /><TaskName><Mixed text="14.11.15新款  90..." /></TaskName></Task>
          <Task $on><CorelMark /><TaskName><Mixed text="CorelDRAW X4 ( ..." /></TaskName></Task>
          <Task><CompassArt /><TaskName><Mixed text="cdr这种阴影怎么..." /></TaskName></Task>
        </TaskList>
        <Keyboard aria-label="输入法"><Art w={14} h={14}><path d="M4 1c3 3 3-1 6 2" stroke="#111" /><rect x="1" y="5" width="12" height="8" fill="#fff" stroke="#111" /><path d="M2 7.500h10M2 9.500h10" stroke="#111" strokeDasharray="1 1" /><path d="M4 11.500h6" stroke="#111" /></Art></Keyboard>
        <Tray>
          <Penguin /><Penguin /><Penguin bow />
          <Art w={17} h={16}><circle cx="8.500" cy="8" r="7.500" fill="#f8e32c" /><path d="M1 8a7.500 7.500 0 0015 0c-5 5-10-3-15 0z" fill="#6cb92c" /><path d="M8.500 4v8M4.500 8h8" stroke="#0a6a14" strokeWidth="2.500" /></Art>
          <Art w={16} h={16}><ellipse cx="6" cy="7" rx="4.500" ry="6" fill="#c4c8ce" stroke="#4a5058" /><circle cx="6" cy="8" r="2" fill="#5a6068" /><path d="M12 4c2 3 1 7-2 10" stroke="#b8e0f8" /></Art>
          <Art w={16} h={16}><path d="M1 9l5-5 4 3 5-1-3 4 2 4-5-2-6 1z" fill="#3d4550" stroke="#dfe6ee" /><path d="M6 1l2 5M5 9l3 3" stroke="#dfe6ee" /></Art>
          <Clock>09:43</Clock>
        </Tray>
      </TaskBar>
    </Window>
  );
}
